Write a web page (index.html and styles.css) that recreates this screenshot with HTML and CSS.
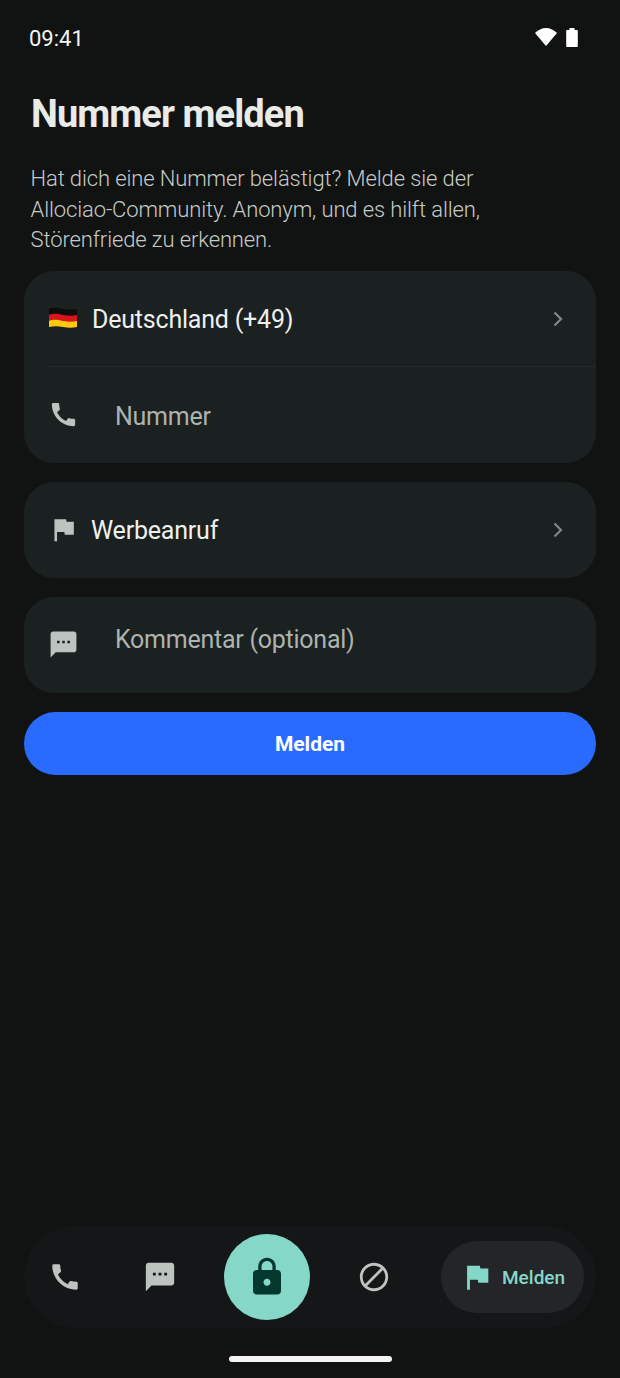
FILE: index.html
```html
<!DOCTYPE html>
<html lang="de">
<head>
  <meta charset="UTF-8">
  <title>Nummer melden</title>
  <meta name="viewport" content="width=device-width, initial-scale=1.0">
  <link rel="stylesheet" href="styles.css">
</head>
<body>
  <div class="page">
    <div class="status-bar">
      <span class="time">09:41</span>
      <div class="status-icons">
        <svg class="wifi" viewBox="0 0 22 18"><path d="M11 18 0 5C3 2 7 0 11 0s8 2 11 5z"/></svg>
        <svg class="battery" viewBox="0 0 11 18"><path d="M3 2V1c0-.5.4-1 1-1h3c.6 0 1 .5 1 1v1h2c.6 0 1 .4 1 1v14c0 .6-.4 1-1 1H1c-.6 0-1-.4-1-1V3c0-.6.4-1 1-1z"/></svg>
      </div>
    </div>

    <main class="content">
      <h1>Nummer melden</h1>
      <p class="intro">Hat dich eine Nummer belästigt? Melde sie der Allociao-Community. Anonym, und es hilft allen, Störenfriede zu erkennen.</p>

      <section class="card">
        <div class="row">
          <svg class="flag-de" viewBox="0 0 30 22">
            <path fill="#0c0c0c" d="M1 2c5-2 9-1 14 0s10 1 14 0v7c-4 1-9 1-14 0S6 8 1 9z"/>
            <path fill="#d8141c" d="M1 8c5-2 9-1 14 0s10 1 14 0v7c-4 1-9 1-14 0S6 14 1 15z"/>
            <path fill="#fdc80f" d="M1 14c5-2 9-1 14 0s10 1 14 0v6c-4 1-9 1-14 0s-9-1-14 0z"/>
          </svg>
          <span class="row-label country">Deutschland (+49)</span>
          <svg class="chevron" viewBox="0 0 12 16"><path d="M2.500 1.500 9 8l-6.500 6.500"/></svg>
        </div>
        <div class="divider"></div>
        <div class="row">
          <svg class="icon" viewBox="0 0 24 24"><use href="#i-phone"/></svg>
          <span class="placeholder">Nummer</span>
        </div>
      </section>

      <section class="card">
        <div class="row">
          <svg class="icon" viewBox="0 0 24 24"><use href="#i-flag"/></svg>
          <span class="row-label reason">Werbeanruf</span>
          <svg class="chevron" viewBox="0 0 12 16"><path d="M2.500 1.500 9 8l-6.500 6.500"/></svg>
        </div>
      </section>

      <section class="card">
        <div class="row comment">
          <svg class="icon" viewBox="0 0 24 24"><use href="#i-sms"/></svg>
          <span class="placeholder">Kommentar (optional)</span>
        </div>
      </section>

      <button class="submit">Melden</button>
    </main>

    <nav class="bottom-nav">
      <div class="nav-item"><svg viewBox="0 0 24 24"><use href="#i-phone"/></svg></div>
      <div class="nav-item"><svg viewBox="0 0 24 24"><use href="#i-sms"/></svg></div>
      <div class="nav-lock"><svg viewBox="0 0 24 24"><path d="M18 8h-1V6c0-2.760-2.240-5-5-5S7 3.240 7 6v2H6c-1.100 0-2 .9-2 2v10c0 1.100.9 2 2 2h12c1.100 0 2-.9 2-2V10c0-1.100-.9-2-2-2zm-6 9c-1.100 0-2-.9-2-2s.9-2 2-2 2 .9 2 2-.9 2-2 2zm3.100-9H8.900V6c0-1.710 1.390-3.100 3.100-3.100 1.710 0 3.100 1.390 3.100 3.100v2z"/></svg></div>
      <div class="nav-item"><svg viewBox="0 0 24 24"><path d="M12 2C6.480 2 2 6.480 2 12s4.480 10 10 10 10-4.480 10-10S17.520 2 12 2zM4 12c0-4.420 3.580-8 8-8 1.850 0 3.550.63 4.900 1.690L5.690 16.900C4.630 15.550 4 13.850 4 12zm8 8c-1.850 0-3.550-.63-4.900-1.690L18.310 7.100C19.370 8.450 20 10.150 20 12c0 4.420-3.580 8-8 8z"/></svg></div>
      <div class="nav-active">
        <svg viewBox="0 0 24 24"><use href="#i-flag"/></svg>
        <span>Melden</span>
      </div>
    </nav>

    <div class="home-indicator"></div>
  </div>

  <svg class="icon-defs" width="0" height="0">
    <defs>
      <path id="i-phone" d="M20.010 15.380c-1.230 0-2.420-.2-3.530-.56-.35-.12-.74-.03-1.010.24l-1.570 1.970c-2.830-1.350-5.480-3.900-6.890-6.830l1.950-1.660c.27-.28.35-.67.24-1.020-.37-1.110-.56-2.300-.56-3.530 0-.54-.45-.99-.99-.99H4.190C3.650 3 3 3.240 3 3.990 3 13.280 10.730 21 20.010 21c.71 0 .99-.63.99-1.180v-3.450c0-.54-.45-.99-.99-.99z"/>
      <path id="i-flag" d="M14.400 6 14 4H5v17h2v-7h5.600l.4 2h7V6z"/>
      <path id="i-sms" d="M20 2H4c-1.100 0-1.990.9-1.990 2L2 22l4-4h14c1.100 0 2-.9 2-2V4c0-1.100-.9-2-2-2zM9 11H7V9h2v2zm4 0h-2V9h2v2zm4 0h-2V9h2v2z"/>
    </defs>
  </svg>
</body>
</html>
```

FILE: styles.css
```css
* { box-sizing: border-box; }
html, body { margin: 0; padding: 0; background: #111313; }
body { font-family: Roboto, "Liberation Sans", sans-serif; color: #eef0ee; }
svg { display: block; flex: none; }

.page { display: flex; flex-direction: column; height: 1378px; overflow: hidden; }
.icon-defs { position: absolute; }

.status-bar { display: flex; justify-content: space-between; align-items: center; height: 26px; margin-top: 24px; padding: 0 42px 0 29px; }
.time { font-size: 22px; margin-top: 2px; color: #f4f5f4; }
.status-icons { display: flex; align-items: center; gap: 9px; fill: #fff; }
.wifi { width: 22px; height: 18px; }
.battery { width: 12px; height: 19px; }

.content { flex: 1; padding: 0 24px; }
h1 { margin: 39px 0 0 7px; font-size: 38px; line-height: 50px; font-weight: 700; letter-spacing: -0.9px; color: #e8ebe8; }
.intro { margin: 25px 90px 15px 6.500px; font-size: 22px; line-height: 30.500px; letter-spacing: -0.12px; font-weight: 300; color: #c6cbc7; }

.card { background: #1b2021; border-radius: 30px; margin-bottom: 19.500px; }
.row { display: flex; align-items: center; height: 95.500px; padding: 0 32px 0 24px; }
.divider { height: 1px; margin-left: 24px; background: #252a2a; }
.icon { width: 31px; height: 31px; fill: #bdc4bf; }
.flag-de { width: 30px; height: 22px; }
.row-label { flex: 1; margin-top: 2px; font-size: 25px; letter-spacing: -0.2px; color: #eef0ee; }
.country { margin-left: 14px; }
.reason { margin-left: 12px; }
.placeholder { margin-left: 36px; margin-top: 3px; font-size: 25px; letter-spacing: -0.25px; color: #adb3af; }
.chevron { width: 12px; height: 16px; margin-top: 1px; fill: none; stroke: #7f8888; stroke-width: 2.200; }
.comment .placeholder { margin-top: 0; margin-bottom: 11px; }

.submit { display: block; width: 100%; height: 63px; border: none; border-radius: 32px; background: #2a6bff; color: #fff; font: 700 21px Roboto, "Liberation Sans", sans-serif; }

.bottom-nav { display: flex; align-items: center; gap: 33px; height: 102px; margin: 0 24px; padding-left: 10px; border-radius: 51px; background: #151617; }
.nav-item { display: flex; justify-content: center; width: 62px; }
.nav-item svg { width: 34px; height: 34px; fill: #bdc4bf; }
.nav-lock { display: flex; align-items: center; justify-content: center; width: 86px; height: 86px; border-radius: 50%; background: #85d8c8; }
.nav-lock svg { width: 42px; height: 42px; fill: #04382f; }
.nav-active { display: flex; align-items: center; gap: 8px; width: 143px; height: 72px; margin-left: 3px; padding-left: 19px; border-radius: 36px; background: #242528; color: #85d8c8; }
.nav-active svg { width: 34px; height: 34px; fill: #85d8c8; }
.nav-active span { font-size: 19px; font-weight: 500; }

.home-indicator { width: 163px; height: 6px; margin: 28px auto 16px; border-radius: 3px; background: #f2f3f2; }
```
